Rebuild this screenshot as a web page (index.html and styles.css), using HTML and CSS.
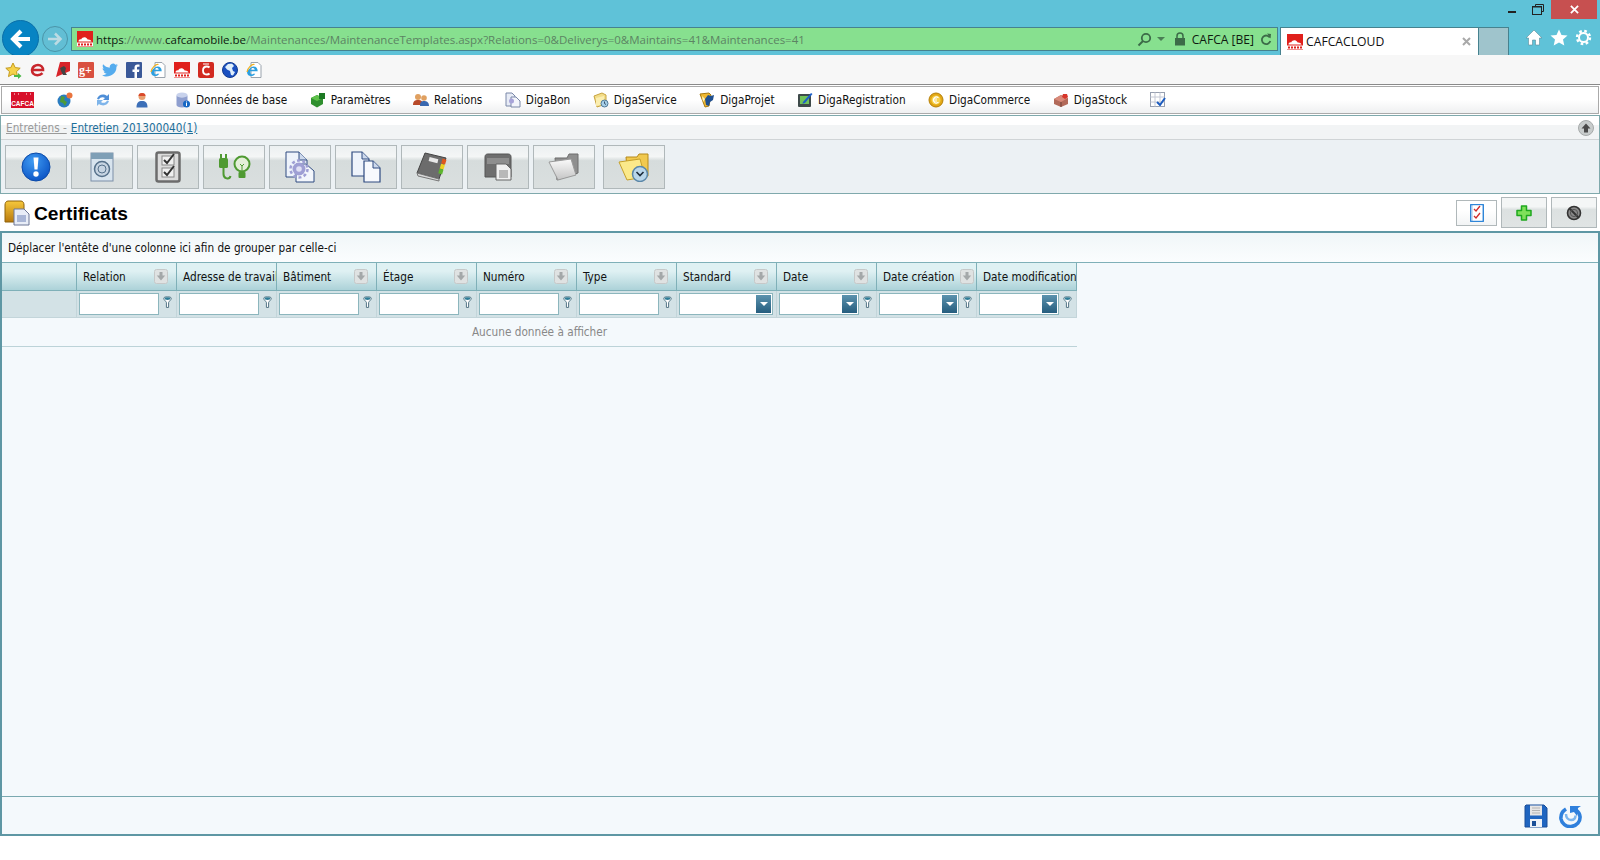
FILE: index.html
```html
<!DOCTYPE html>
<html lang="fr">
<head>
    <meta charset="UTF-8">
    <title>CAFCACLOUD</title>
    <link rel="stylesheet" href="styles.css">
</head>
<body>
    <svg class="icon-defs" xmlns="http://www.w3.org/2000/svg">
        <defs>
            <radialGradient id="info-fill" cx="40%" cy="30%" r="75%">
                <stop offset="0" stop-color="#3f9bf2"/>
                <stop offset="1" stop-color="#0a52c4"/>
            </radialGradient>
            <linearGradient id="grey-fold" x1="0" y1="0" x2="0" y2="1">
                <stop offset="0" stop-color="#fbfbfb"/>
                <stop offset="1" stop-color="#c4c4c4"/>
            </linearGradient>
            <linearGradient id="box-fill" x1="0" y1="0" x2="0" y2="1">
                <stop offset="0" stop-color="#f6c83c"/>
                <stop offset="1" stop-color="#b9790c"/>
            </linearGradient>
        </defs>
        <symbol id="cafca" viewBox="0 0 16 16">
            <rect width="16" height="16" fill="#e0201c"/>
            <path d="M1.500 10.500c0-1.600 1.400-2.400 2.600-2.100C5 6.600 7 5.800 8.600 6.400c1.200.4 1.800 1.300 2 2.100 1.500-.3 3.600.4 3.900 2z" fill="#fff"/>
            <rect y="11.500" width="16" height="4" fill="#fff"/>
            <path d="M1 13.500h14" stroke="#e0201c" stroke-width="2" stroke-dasharray="2 1"/>
        </symbol>
        <symbol id="ie-page" viewBox="0 0 16 16">
            <path d="M5 .5h7l3 3v12H5z" fill="#fff" stroke="#9aa3ad"/>
            <path d="M4.500 9.200h7.200c0-3.200-1.800-4.700-3.800-4.700S3.500 6 1 9.500c0 3 1.600 4.500 3.800 4.500 2.200 0 3.600-.8 4.400-2.300H7.400c-1.400 1.400-3.400.8-3-2.500zm.1-1.500c.3-1.200 1.600-1.800 2.600-1.600.8.1 1.400.7 1.500 1.600z" fill="#2c9fe0"/>
            <path d="M1 10C1.500 6 6 1.500 8.500 2.500" fill="none" stroke="#f0b020" stroke-width="1.200"/>
        </symbol>
        <symbol id="sort" viewBox="0 0 14 15">
            <rect x=".5" y=".5" width="13" height="14" rx="2" fill="#dfe2e2" stroke="#c6c8c8"/>
            <path d="M5.500 3h3v3.500h2.700L7 11.500 2.800 6.500h2.700z" fill="#a4a8a9"/>
        </symbol>
        <symbol id="funnel" viewBox="0 0 10 14">
            <path d="M.8 2.500C.8 1 2.800.7 5 .7s4.200.3 4.200 1.800c0 1.400-2.500 3.200-3 4.500v5.500H3.800V7c-.5-1.300-3-3.100-3-4.500z" fill="#fff" stroke="#44697a" stroke-width="1"/>
            <ellipse cx="5" cy="2.600" rx="3.300" ry="1.500" fill="#2f7d97"/>
        </symbol>
    </svg>

    <header class="chrome">
        <div class="caption">
            <span class="win-min"></span>
            <svg class="win-restore" width="12" height="11" viewBox="0 0 12 11"><path d="M3.500 2.500v-2h8v7h-2" fill="none" stroke="#222"/><rect x=".5" y="2.500" width="9" height="8" fill="none" stroke="#222" stroke-width="1"/><path d="M0 3h10" stroke="#222"/></svg>
            <span class="win-close">
                <svg width="9" height="9" viewBox="0 0 10 10"><path d="M1 1l8 8M9 1l-8 8" stroke="#fff" stroke-width="2"/></svg>
            </span>
        </div>
        <div class="nav-row">
            <button class="back-btn">
                <svg width="24" height="24" viewBox="0 0 24 24"><path d="M21 12H5M12 4l-8 8 8 8" fill="none" stroke="#fff" stroke-width="4"/></svg>
            </button>
            <button class="forward-btn">
                <svg width="16" height="16" viewBox="0 0 16 16"><path d="M1 8h12M8 2.500 13.500 8 8 13.500" fill="none" stroke="#bcdbe3" stroke-width="2.500"/></svg>
            </button>
            <div class="address-bar">
                <svg class="favicon" width="16" height="16"><use href="#cafca"/></svg>
                <span class="url"><span class="url-dark">https</span>://www.<span class="url-dark">cafcamobile.be</span>/Maintenances/MaintenanceTemplates.aspx?Relations=0&amp;Deliverys=0&amp;Maintains=41&amp;Maintenances=41</span>
                <svg class="addr-search" width="15" height="15" viewBox="0 0 15 15"><circle cx="9" cy="6" r="4.200" fill="none" stroke="#3c6b48" stroke-width="1.800"/><path d="M6 9l-4.500 4.500" stroke="#3c6b48" stroke-width="2"/></svg>
                <span class="addr-caret"></span>
                <svg class="addr-lock" width="12" height="14" viewBox="0 0 12 14"><path d="M3 6V4a3 3 0 0 1 6 0v2" fill="none" stroke="#3c6b48" stroke-width="1.500"/><rect x="1" y="6" width="10" height="7.500" fill="#3c6b48"/></svg>
                <span class="addr-cert">CAFCA [BE]</span>
                <svg class="addr-refresh" width="12" height="13" viewBox="0 0 12 13"><path d="M9.800 4.500A4.300 4.300 0 1 0 10.300 8" fill="none" stroke="#3c6b48" stroke-width="1.800"/><path d="M7 .5l4 .5-.5 4.500z" fill="#3c6b48"/></svg>
            </div>
            <div class="tab">
                <svg width="16" height="16"><use href="#cafca"/></svg>
                <span class="tab-title">CAFCACLOUD</span>
                <svg class="tab-close" width="9" height="9" viewBox="0 0 9 9"><path d="M1 1l7 7M8 1 1 8" stroke="#a9a9a9" stroke-width="2"/></svg>
            </div>
            <div class="new-tab"></div>
            <div class="chrome-tools">
                <svg width="18" height="17" viewBox="0 0 18 17"><path d="M9 1 1 9h2.500v7h4v-5h3v5h4V9H17z" fill="#fff" stroke="#5a8b98" stroke-width=".6"/></svg>
                <svg width="18" height="17" viewBox="0 0 18 17"><path d="M9 .5l2.500 5.500 6 .6-4.500 4 1.300 6L9 13.500 3.700 16.600 5 10.600.5 6.600l6-.6z" fill="#fff"/></svg>
                <svg width="17" height="17" viewBox="0 0 17 17"><circle cx="8.500" cy="8.500" r="4.500" fill="none" stroke="#fff" stroke-width="2"/><circle cx="8.500" cy="8.500" r="6.500" fill="none" stroke="#fff" stroke-width="2.400" stroke-dasharray="2.600 2.500"/></svg>
            </div>
        </div>
    </header>

    <div class="fav-bar">
        <svg width="17" height="17" viewBox="0 0 17 17"><path d="M8 1l2.200 4.600 5 .6-3.700 3.400 1 5L8 12l-4.500 2.600 1-5L.8 6.200l5-.6z" fill="#f6d24a" stroke="#c49a1c"/><path d="M9 13h4v-2l3.500 3-3.500 3v-2H9z" fill="#4cb848"/></svg>
        <svg width="16" height="16" viewBox="0 0 16 16"><path d="M2.500 8h10.500c0-3-2.200-5-5-5S2 5 2 8s2.300 5.200 5.500 5.200c2 0 3.800-.8 5-2" fill="none" stroke="#c8262c" stroke-width="2.600"/></svg>
        <svg width="16" height="16" viewBox="0 0 16 16"><path d="M6 0h10v9L2 15z" fill="#d8242a"/><path d="M6 6l4-2 2 2-1 4 2 3H9L7 9z" fill="#444"/></svg>
        <svg width="16" height="16" viewBox="0 0 16 16"><rect width="16" height="16" rx="1" fill="#d9503f"/><text x="1" y="12" class="gplus-text">g+</text></svg>
        <svg width="16" height="16" viewBox="0 0 16 16"><path d="M16 3.200c-.6.300-1.200.4-1.900.5.700-.4 1.200-1 1.400-1.800-.6.400-1.300.6-2.100.8A3.300 3.300 0 0 0 7.800 5.700C5.100 5.600 2.700 4.300 1.100 2.300.3 3.800.7 5.600 2.100 6.600c-.5 0-1-.2-1.500-.4 0 1.600 1.100 2.900 2.600 3.200-.5.100-1 .2-1.500.1.400 1.300 1.600 2.200 3 2.300A6.600 6.600 0 0 1 0 13.200c5.200 3.300 15-.1 14.400-8.400.6-.4 1.200-1 1.600-1.600z" fill="#55acee"/></svg>
        <svg width="16" height="16" viewBox="0 0 16 16"><rect width="16" height="16" rx="1" fill="#3b5998"/><path d="M11 16V10h2l.4-2.500H11V6c0-.8.3-1.200 1.200-1.200h1.300V2.500C13 2.400 12.300 2.400 11.500 2.400 9.700 2.400 8.500 3.500 8.500 5.600v1.900h-2V10h2v6z" fill="#fff"/></svg>
        <svg width="16" height="16"><use href="#ie-page"/></svg>
        <svg width="16" height="16"><use href="#cafca"/></svg>
        <svg width="16" height="16" viewBox="0 0 16 16"><rect width="16" height="16" rx="2" fill="#d22a20"/><path d="M11.500 5.500C10.800 4.800 9.800 4.500 8.800 4.500 6.800 4.500 5 6 5 8.500s1.800 4 3.800 4c1 0 2-.3 2.700-1" fill="none" stroke="#fff" stroke-width="1.800"/><path d="M5 2h6" stroke="#fff"/></svg>
        <svg width="16" height="16" viewBox="0 0 16 16"><circle cx="8" cy="8" r="7.500" fill="#1a4fc0"/><path d="M6 2l4-.5 2 2.500-2 2 1 3 2 1-2 3.500-2-.5-1-4-3-1.500L3 5z" fill="#dfeefb"/><circle cx="8" cy="8" r="7.500" fill="none" stroke="#123a90"/></svg>
        <svg width="16" height="16"><use href="#ie-page"/></svg>
    </div>

    <nav class="menu-bar">
        <svg class="menu-logo" width="23" height="16" viewBox="0 0 23 16"><rect width="23" height="16" fill="#d8102a"/><path d="M3 2h2M7 2h2M15 2h2M19 2h1" stroke="#fff" stroke-dasharray="1 1"/><text x="11.500" y="13.500" class="logo-text">CAFCA</text></svg>
        <svg width="16" height="16" viewBox="0 0 16 16"><circle cx="7" cy="9" r="6.500" fill="#2a7cc0"/><path d="M4 4l4 1-1 3 3 2-2 4-2-3-3-1z" fill="#4d9b3a"/><circle cx="12.500" cy="3.500" r="3" fill="#e9743e"/></svg>
        <svg width="16" height="16" viewBox="0 0 16 16"><path d="M2 7c1-4 6-6 10-3l2-2v6H8l2-2C8 4.500 5 5 4 7.500z" fill="#4f8fd8"/><path d="M14 9c-1 4-6 6-10 3l-2 2V8h6l-2 2c2 1.500 5 1 6-1.500z" fill="#7fb5ea"/></svg>
        <svg width="16" height="16" viewBox="0 0 16 16"><circle cx="8" cy="4.500" r="3.500" fill="#e8a070"/><path d="M4.500 4a3.500 3 0 0 1 7 0z" fill="#d9482a"/><path d="M2.500 15.500c0-5 2-6.500 5.500-6.500s5.500 1.500 5.500 6.500z" fill="#3c6fb8"/></svg>
        <a class="menu-item menu-item-first"><svg width="16" height="16" viewBox="0 0 16 16"><ellipse cx="7" cy="3" rx="5.500" ry="2.500" fill="#c8d2ec"/><path d="M1.500 3v10c0 1.400 2.500 2.500 5.500 2.500S12.500 14.400 12.500 13V3c0 1.400-2.500 2.500-5.500 2.500S1.500 4.400 1.500 3z" fill="#8f9fcf"/><circle cx="11.500" cy="12" r="3.500" fill="#1768c4"/><rect x="11" y="9.500" width="1" height="1" fill="#fff"/><rect x="11" y="11" width="1" height="3" fill="#fff"/></svg>Données de base</a>
        <a class="menu-item"><svg width="16" height="16" viewBox="0 0 16 16"><path d="M1 6l6-3 6 3v6l-6 3.500L1 12z" fill="#2f8f2f"/><path d="M1 6l6 3 6-3-6-3z" fill="#5fc24a"/><rect x="9" y="1" width="6" height="6" fill="#1d7a24"/></svg>Paramètres</a>
        <a class="menu-item"><svg width="16" height="16" viewBox="0 0 16 16"><circle cx="5" cy="5" r="3" fill="#e0a060"/><path d="M0 13c0-4 2-5 5-5s5 1 5 5z" fill="#b84a2a"/><circle cx="11" cy="6" r="2.800" fill="#e0a060"/><path d="M7 14c0-4 1.500-5 4-5s5 1 5 5z" fill="#3968b0"/></svg>Relations</a>
        <a class="menu-item"><svg width="16" height="16" viewBox="0 0 16 16"><path d="M1 1h6l3 3v10H1z" fill="#e8ecf6" stroke="#7a88a8"/><path d="M6 5h5l4 4v6H6z" fill="#f3f5fb" stroke="#7a88a8"/><circle cx="6.500" cy="9" r="2.500" fill="#a8a4d8"/></svg>DigaBon</a>
        <a class="menu-item"><svg width="16" height="16" viewBox="0 0 16 16"><path d="M1 4l8-3 4 2v9l-9 3z" fill="#f3dd88" stroke="#c8a440"/><path d="M3 6l8-2v8l-8 2z" fill="#fbeeb0"/><circle cx="11.500" cy="11.500" r="3.500" fill="#a8d0e8" stroke="#507a98"/><path d="M11.500 9.500v2l1.500 1" stroke="#34506a" fill="none"/></svg>DigaService</a>
        <a class="menu-item"><svg width="16" height="16" viewBox="0 0 16 16"><path d="M1 2l9-1 2 2-2 11-4 1z" fill="#f0b830" stroke="#a87a10"/><path d="M6 7l3-4 3 1 3-1-1 5-3 2-1 4-3-1z" fill="#1f4f8f"/><path d="M3 4l3 3-2 3z" fill="#fff3c0"/></svg>DigaProjet</a>
        <a class="menu-item"><svg width="16" height="16" viewBox="0 0 16 16"><rect x="1" y="2" width="13" height="13" rx="1" fill="#3e4a4a"/><rect x="3" y="4" width="9" height="8" fill="#6fc25a"/><path d="M6 10 14 1l1.500 1L8 11l-2.500.8z" fill="#1c5fc8"/></svg>DigaRegistration</a>
        <a class="menu-item"><svg width="16" height="16" viewBox="0 0 16 16"><circle cx="8" cy="8" r="7" fill="#e2a714" stroke="#b57f08"/><circle cx="8" cy="8" r="4.600" fill="#f7d24c"/><path d="M10.500 5.800A3 3 0 1 0 10.500 10.200M5 7h4M5 9h4" fill="none" stroke="#fff" stroke-width="1.100"/></svg>DigaCommerce</a>
        <a class="menu-item"><svg width="16" height="16" viewBox="0 0 16 16"><path d="M1 7l7-4 7 3v6l-7 3-7-3z" fill="#b26a5a"/><path d="M1 7l7 3 7-4-7-3z" fill="#d98a7a"/><path d="M8 10v5" stroke="#6e4038"/><path d="M10 2h4l1 3-3 2-3-2z" fill="#d8362a"/></svg>DigaStock</a>
        <svg width="16" height="16" viewBox="0 0 16 16"><rect x=".5" y=".5" width="14" height="14" fill="#fff" stroke="#98a0b0"/><path d="M5 .5v14M10 .5v14M.5 5h14M.5 10h14" stroke="#c4c8d4"/><path d="M7 10l3 3 5-7" fill="none" stroke="#1c5cc0" stroke-width="2"/></svg>
    </nav>

    <section class="record-panel">
        <div class="breadcrumb">
            <span class="crumb-parent">Entretiens -</span>
            <a class="crumb-current">Entretien 201300040(1)</a>
            <span class="collapse-btn">
                <svg width="10" height="10" viewBox="0 0 10 10"><path d="M5 .5 9.500 5.500H7V9.500H3V5.500H.5z" fill="#4a4a4a"/></svg>
            </span>
        </div>
        <div class="toolbar">
            <button class="tool-btn">
                <svg width="30" height="30" viewBox="0 0 30 30"><circle cx="15" cy="15" r="14" fill="url(#info-fill)" stroke="#0b4aa8"/><path d="M12.500 5.500h5l-1 12h-3z" fill="#fff"/><circle cx="15" cy="22" r="2.700" fill="#fff"/></svg>
            </button>
            <button class="tool-btn">
                <svg width="24" height="30" viewBox="0 0 24 30"><rect x="1" y="1" width="22" height="28" fill="#d8e4ee" stroke="#7d8fa8"/><rect x="1" y="1" width="22" height="6" fill="#7f9fb6"/><circle cx="12" cy="17" r="7.500" fill="#c6d4e2" stroke="#55708a" stroke-width="1.500"/><circle cx="12" cy="17" r="4" fill="none" stroke="#55708a"/></svg>
            </button>
            <button class="tool-btn">
                <svg width="26" height="32" viewBox="0 0 26 32"><rect x="1.500" y="1.500" width="23" height="29" rx="2" fill="#dcdcdc" stroke="#6c6c6c" stroke-width="2.500"/><rect x="7" y="5" width="12" height="9" fill="#f0f0f0" stroke="#888"/><rect x="7" y="17" width="12" height="9" fill="#f0f0f0" stroke="#888"/><path d="M9 9l3 3 7-9M9 21l3 3 7-9" fill="none" stroke="#333" stroke-width="2"/></svg>
            </button>
            <button class="tool-btn">
                <svg width="34" height="28" viewBox="0 0 34 28"><rect x="2" y="5" width="9" height="10" rx="1.500" fill="#4f9a32"/><path d="M4 1v4M9 1v4" stroke="#4f9a32" stroke-width="2"/><path d="M6.500 15v6c0 5 6 6 7 2" fill="none" stroke="#4f9a32" stroke-width="2"/><circle cx="25" cy="11" r="7.500" fill="#e4efd8" stroke="#4f9a32" stroke-width="2"/><path d="M25 18v-5l-2-2M25 13l2-2" fill="none" stroke="#4f9a32"/><rect x="21.500" y="19" width="7" height="6" rx="1" fill="#4f9a32"/></svg>
            </button>
            <button class="tool-btn">
                <svg width="32" height="32" viewBox="0 0 32 32"><path d="M2 1h13l8 8v17H2z" fill="#eef3fb" stroke="#2e4a80"/><path d="M15 1v8h8" fill="#cdd9ec" stroke="#2e4a80"/><path d="M12 13h10l8 7v11H12z" fill="#f4f7fc" stroke="#2e4a80"/><circle cx="15" cy="18" r="6.500" fill="#9f9fd4"/><circle cx="15" cy="18" r="8.500" fill="none" stroke="#9f9fd4" stroke-width="2.500" stroke-dasharray="3 2.400"/><circle cx="15" cy="18" r="2.800" fill="#e0e0f4"/></svg>
            </button>
            <button class="tool-btn">
                <svg width="32" height="32" viewBox="0 0 32 32"><path d="M2 1h10l7 7v17H2z" fill="#eef3fb" stroke="#2e4a80" stroke-width="1.200"/><path d="M12 1v7h7" fill="#cdd9ec" stroke="#2e4a80"/><path d="M14 10h9l7 7v14H14z" fill="#f7f9fd" stroke="#2e4a80" stroke-width="1.200"/><path d="M23 10v7h7" fill="#cdd9ec" stroke="#2e4a80"/></svg>
            </button>
            <button class="tool-btn">
                <svg width="32" height="30" viewBox="0 0 32 30"><path d="M9 1 30 6 23 27 1 21z" fill="#6c6c6c" stroke="#444"/><path d="M1 21l22 6v2L2 24z" fill="#d8d8d8" stroke="#777"/><rect x="13" y="6" width="9" height="4" transform="rotate(14 17 8)" fill="#e8e8e8"/><rect x="26" y="7" width="4" height="5" transform="rotate(16 28 9)" fill="#e0561e"/><rect x="24.500" y="12" width="4" height="5" transform="rotate(16 26 14)" fill="#eed020"/><rect x="23" y="17" width="4" height="5" transform="rotate(16 25 19)" fill="#5db52e"/></svg>
            </button>
            <button class="tool-btn">
                <svg width="30" height="30" viewBox="0 0 30 30"><path d="M2 5c0-2 1-3 3-3h20c2 0 3 1 3 3v20H2z" fill="#6e6e6e" stroke="#555"/><rect x="4" y="6" width="22" height="6" fill="#8e8e8e"/><path d="M13 12h10l5 5v11H13z" fill="#f0f0f0" stroke="#666"/><rect x="16" y="18" width="9" height="8" fill="#b8b8b8"/></svg>
            </button>
            <button class="tool-btn">
                <svg width="32" height="30" viewBox="0 0 32 30"><path d="M7 6h12l2-4h9v19l-21 7z" fill="#8f8f8f" stroke="#6f6f6f"/><path d="M1 10l22-3 5 16-18 5z" fill="url(#grey-fold)" stroke="#9a9a9a"/></svg>
            </button>
            <button class="tool-btn tool-btn-last">
                <svg width="32" height="30" viewBox="0 0 32 30"><path d="M8 5h11l2-3h9v22l-20 3z" fill="#f1c94f" stroke="#b58a1c"/><path d="M1 10l21-3 5 18-18 3z" fill="#fbe98a" stroke="#c6a02a"/><circle cx="22" cy="22" r="7.500" fill="#b9d6ea" stroke="#5a87a8" stroke-width="1.500"/><path d="M18.500 20l3.500 3.500 3.500-3.500" fill="none" stroke="#1d2b3a" stroke-width="1.600"/></svg>
            </button>
        </div>
    </section>

    <div class="page-title">
        <svg class="title-icon" width="26" height="26" viewBox="0 0 26 26"><path d="M1 5c0-2 1-4 3-4h13c2 0 3 2 3 4v17H1z" fill="url(#box-fill)" stroke="#8f620b"/><path d="M10 9h10l5 5v11H10z" fill="#e8edf7" stroke="#6d7796"/><rect x="13" y="15" width="9" height="7" fill="#a9b6d6"/></svg>
        <h1>Certificats</h1>
        <div class="title-actions">
            <button class="action-btn action-btn-small">
                <svg width="14" height="18" viewBox="0 0 14 18"><rect x=".5" y=".5" width="13" height="17" rx="1" fill="#cfe0f6" stroke="#2f86d8" stroke-width="1.500"/><rect x="3" y="1.500" width="9" height="15" fill="#fff"/><path d="M4 5l2 2 4-5M4 12l2 2 4-5" fill="none" stroke="#d02a2a" stroke-width="1.300"/></svg>
            </button>
            <button class="action-btn">
                <svg width="16" height="16" viewBox="0 0 16 16"><path d="M5.500 1h5v4.500H15v5h-4.500V15h-5v-4.500H1v-5h4.500z" fill="#7fe05a" stroke="#1fa81f" stroke-width="1.500" stroke-linejoin="round"/></svg>
            </button>
            <button class="action-btn">
                <svg width="16" height="16" viewBox="0 0 16 16"><circle cx="8" cy="8" r="6.500" fill="#8a8a8a" stroke="#333" stroke-width="1.600"/><path d="M3.800 3.800l8.400 8.400" stroke="#333" stroke-width="2"/><circle cx="8" cy="8" r="3.600" fill="none" stroke="#555"/></svg>
            </button>
        </div>
    </div>

    <main class="grid-wrap">
        <div class="group-panel">Déplacer l'entête d'une colonne ici afin de grouper par celle-ci</div>
        <div class="data-grid">
            <div class="head-cell head-indent"></div>
            <div class="head-cell"><span>Relation</span><svg class="sort-btn"><use href="#sort"/></svg></div>
            <div class="head-cell"><span>Adresse de travail</span></div>
            <div class="head-cell"><span>Bâtiment</span><svg class="sort-btn"><use href="#sort"/></svg></div>
            <div class="head-cell"><span>Étage</span><svg class="sort-btn"><use href="#sort"/></svg></div>
            <div class="head-cell"><span>Numéro</span><svg class="sort-btn"><use href="#sort"/></svg></div>
            <div class="head-cell"><span>Type</span><svg class="sort-btn"><use href="#sort"/></svg></div>
            <div class="head-cell"><span>Standard</span><svg class="sort-btn"><use href="#sort"/></svg></div>
            <div class="head-cell"><span>Date</span><svg class="sort-btn"><use href="#sort"/></svg></div>
            <div class="head-cell"><span>Date création</span><svg class="sort-btn sort-btn-tight"><use href="#sort"/></svg></div>
            <div class="head-cell"><span>Date modification</span></div>

            <div class="filter-cell"></div>
            <div class="filter-cell"><span class="filter-input"></span><svg class="funnel"><use href="#funnel"/></svg></div>
            <div class="filter-cell"><span class="filter-input"></span><svg class="funnel"><use href="#funnel"/></svg></div>
            <div class="filter-cell"><span class="filter-input"></span><svg class="funnel"><use href="#funnel"/></svg></div>
            <div class="filter-cell"><span class="filter-input"></span><svg class="funnel"><use href="#funnel"/></svg></div>
            <div class="filter-cell"><span class="filter-input"></span><svg class="funnel"><use href="#funnel"/></svg></div>
            <div class="filter-cell"><span class="filter-input"></span><svg class="funnel"><use href="#funnel"/></svg></div>
            <div class="filter-cell"><span class="filter-input filter-input-wide"><span class="drop-btn"></span></span></div>
            <div class="filter-cell"><span class="filter-input"><span class="drop-btn"></span></span><svg class="funnel"><use href="#funnel"/></svg></div>
            <div class="filter-cell"><span class="filter-input"><span class="drop-btn"></span></span><svg class="funnel"><use href="#funnel"/></svg></div>
            <div class="filter-cell"><span class="filter-input"><span class="drop-btn"></span></span><svg class="funnel"><use href="#funnel"/></svg></div>

            <div class="no-data">Aucune donnée à afficher</div>
        </div>
        <div class="grid-fill"></div>
        <div class="grid-footer">
            <svg width="24" height="24" viewBox="0 0 24 24"><path d="M2 1h18l3 3v19H1V2z" fill="#1f65c0" stroke="#1a4f98"/><rect x="6" y="1.500" width="12" height="10" fill="#e6e6e6"/><path d="M8 4h8M8 6.500h8M8 9h8" stroke="#b4b4b4"/><rect x="6" y="15" width="12" height="8" fill="#eef2f8"/><rect x="8" y="17" width="4" height="5" fill="#1a4f98"/></svg>
            <svg width="24" height="24" viewBox="0 0 24 24"><path d="M7 5C3 7.500 1.500 11 2 15c.7 4.500 5 8 10 7.500 6-.5 9.500-5 9-10-.3-3-2-5-4-6.500" fill="none" stroke="#2f80dc" stroke-width="3.600"/><path d="M7 10c0 3.500 2 6 5 6s4.500-2 4.500-4.500" fill="none" stroke="#7cb6ee" stroke-width="2.500"/><path d="M11 2h11l-3 2-1 8-3-4-4 1z" fill="#2f80dc"/></svg>
        </div>
    </main>
</body>
</html>
```

FILE: styles.css
```css
* {
    box-sizing: border-box;
}

body {
    margin: 0;
    background-color: #fff;
    font-family: 'DejaVu Sans Condensed', 'DejaVu Sans', sans-serif;
    font-size: 11.7px;
    color: #111;
    height: 860px;
    overflow: hidden;
}

svg {
    display: block;
    flex: none;
}

button {
    padding: 0;
    font: inherit;
}

.icon-defs {
    position: absolute;
    width: 0;
    height: 0;
}

/* browser chrome */
.chrome {
    height: 55px;
    background-color: #5fc2d8;
    overflow: hidden;
}

.caption {
    height: 27px;
    display: flex;
    justify-content: flex-end;
    align-items: flex-start;
    padding-right: 3px;
}

.win-min {
    width: 8px;
    height: 2px;
    background-color: #222;
    margin: 11px 16px 0 0;
}

.win-restore {
    margin: 4px 7px 0 0;
}

.win-close {
    width: 46px;
    height: 19px;
    background-color: #c75050;
    display: flex;
    align-items: center;
    justify-content: center;
}

.nav-row {
    height: 28px;
    display: flex;
    align-items: flex-start;
    padding-left: 2px;
}

.back-btn {
    width: 37px;
    height: 37px;
    margin-top: -7px;
    border-radius: 50%;
    border: 1px solid #0a6fa8;
    background-color: #0784c3;
    display: flex;
    align-items: center;
    justify-content: center;
    flex: none;
}

.forward-btn {
    width: 26px;
    height: 26px;
    margin: -1px 3px 0 3px;
    border-radius: 50%;
    border: 1px solid #4b94a8;
    background-color: #62bed4;
    display: flex;
    align-items: center;
    justify-content: center;
    flex: none;
}

.address-bar {
    width: 1207px;
    height: 24px;
    background-color: #87e08f;
    border: 1px solid #46828f;
    display: flex;
    align-items: center;
    padding: 0 5px;
    flex: none;
    font-family: 'Open Sans', sans-serif;
    font-size: 11.500px;
    color: #5c8463;
}

.favicon {
    margin-right: 3px;
}

.url {
    flex: 1;
    white-space: nowrap;
    overflow: hidden;
}

.url-dark {
    color: #0e1a10;
}

.addr-caret {
    width: 0;
    height: 0;
    border-left: 4px solid transparent;
    border-right: 4px solid transparent;
    border-top: 4px solid #4a7f55;
    margin: 0 9px 0 5px;
}

.addr-cert {
    color: #0e1a10;
    margin: 0 6px 0 6px;
    font-size: 12.100px;
}

.tab {
    width: 199px;
    height: 28px;
    margin-left: 2px;
    background-color: #fff;
    border: 1px solid #46828f;
    border-bottom: none;
    display: flex;
    align-items: center;
    padding: 0 7px 0 6px;
    font-family: 'Open Sans', sans-serif;
    font-size: 12.200px;
    flex: none;
}

.tab-title {
    flex: 1;
    margin-left: 3px;
}

.new-tab {
    width: 30px;
    height: 28px;
    background-color: #9fc4cc;
    border-right: 1px solid #46828f;
    border-top: 1px solid #46828f;
    flex: none;
}

.chrome-tools {
    display: flex;
    align-items: center;
    gap: 7px;
    margin: 2px 0 0 16px;
}

.fav-bar {
    height: 30px;
    background-color: #f7f7f7;
    border-bottom: 1px solid #8a8a8a;
    display: flex;
    align-items: center;
    gap: 8px;
    padding: 1px 0 0 5px;
}

.gplus-text {
    font-family: 'Liberation Serif', serif;
    font-size: 12px;
    font-weight: bold;
    fill: #fff;
}

/* menu */
.menu-bar {
    height: 28px;
    margin: 1px 1px 0 1px;
    border: 1px solid #aaa;
    background: linear-gradient(#fff 50%, #eff0f1);
    display: flex;
    align-items: center;
    gap: 22.500px;
    padding-left: 9px;
}

.logo-text {
    font-family: 'Liberation Sans', sans-serif;
    font-size: 6.500px;
    font-weight: bold;
    fill: #fff;
    text-anchor: middle;
}

.menu-item {
    display: flex;
    align-items: center;
    gap: 5px;
    white-space: nowrap;
}

.menu-item-first {
    margin-left: 3px;
}

/* record panel */
.record-panel {
    margin-top: 1px;
    height: 79px;
    border: 1px solid #7fa9ac;
    background-color: #ecf1f4;
}

.breadcrumb {
    height: 24px;
    background: linear-gradient(#fff 40%, #f2f4f5 40%);
    border-bottom: 1px solid #d0d4d6;
    display: flex;
    align-items: center;
    gap: 4px;
    padding: 0 5px;
}

.crumb-parent {
    color: #9a9a9a;
    text-decoration: underline;
}

.crumb-current {
    color: #1d6f9a;
    text-decoration: underline;
}

.collapse-btn {
    width: 16px;
    height: 16px;
    margin-left: auto;
    border-radius: 50%;
    background-color: #c8cccc;
    border: 1px solid #a6aaaa;
    display: flex;
    align-items: center;
    justify-content: center;
}

.toolbar {
    display: flex;
    gap: 4px;
    padding: 5px 0 0 4px;
}

.tool-btn {
    width: 62px;
    height: 44px;
    border: 1px solid #b0b8ba;
    background: linear-gradient(#ecf0f1, #f4f6f6 25%, #d6dcdc 35%, #dadfdf);
    display: flex;
    align-items: center;
    justify-content: center;
}

.tool-btn-last {
    margin-left: 4px;
}

/* title row */
.page-title {
    height: 37px;
    display: flex;
    align-items: center;
    padding: 0 3px 0 4px;
}

.title-icon {
    margin-right: 4px;
}

.page-title h1 {
    margin: 0;
    padding-top: 2px;
    font-family: 'Liberation Sans', sans-serif;
    font-size: 19.200px;
    font-weight: bold;
    color: #000;
}

.title-actions {
    margin-left: auto;
    display: flex;
    align-items: center;
    gap: 4px;
}

.action-btn {
    width: 46px;
    height: 31px;
    border: 1px solid #b0b8ba;
    background: linear-gradient(#f4f6f6 30%, #dce1e1 40%, #e0e4e4);
    display: flex;
    align-items: center;
    justify-content: center;
}

.action-btn-small {
    width: 41px;
    height: 26px;
    background: linear-gradient(#fff 40%, #f2f4f5);
}

/* grid */
.grid-wrap {
    height: 605px;
    border: 2px solid #5e97a4;
    background-color: #f4f9fc;
    display: flex;
    flex-direction: column;
}

.group-panel {
    height: 30px;
    flex: none;
    background: linear-gradient(#f0f6f8, #fbfdfe);
    border-bottom: 1px solid #7fb0b8;
    display: flex;
    align-items: center;
    padding-left: 6px;
}

.data-grid {
    display: grid;
    grid-template-columns: 75px repeat(10, 100px);
    grid-template-rows: 28px 27px 29px;
    width: 1075px;
    flex: none;
}

.head-cell {
    border-right: 1px solid #7fb0b8;
    border-bottom: 1px solid #7fb0b8;
    background: linear-gradient(#dff1f3 30%, #acd2d8);
    display: flex;
    align-items: center;
    padding-left: 6px;
    overflow: hidden;
    white-space: nowrap;
}

.head-cell span {
    flex: 1;
}

.head-indent {
    padding: 0;
}

.sort-btn {
    width: 14px;
    height: 15px;
    margin-right: 8px;
}

.sort-btn-tight {
    margin-right: 2px;
}

.filter-cell {
    background-color: #d3e2e6;
    border-right: 1px solid #c3d5da;
    border-bottom: 1px solid #c3d5da;
    display: flex;
    align-items: center;
    padding: 0 0 1px 2px;
}

.filter-input {
    width: 80px;
    height: 22px;
    background-color: #fff;
    border: 1px solid #8cb6bd;
    display: flex;
    justify-content: flex-end;
    padding: 1px;
}

.filter-input-wide {
    width: 94px;
}

.drop-btn {
    width: 15px;
    background: linear-gradient(#5c93ae, #255d7e);
    display: flex;
    align-items: center;
    justify-content: center;
}

.drop-btn::after {
    content: "";
    border-left: 4px solid transparent;
    border-right: 4px solid transparent;
    border-top: 4px solid #fff;
}

.funnel {
    width: 9px;
    height: 13px;
    margin: -2px 0 0 4px;
}

.no-data {
    grid-column: 1 / -1;
    border-bottom: 1px solid #bcd3d8;
    color: #888;
    display: flex;
    align-items: center;
    justify-content: center;
}

.grid-fill {
    flex: 1;
}

.grid-footer {
    height: 38px;
    flex: none;
    border-top: 1px solid #7aa9b0;
    display: flex;
    align-items: center;
    justify-content: flex-end;
    gap: 11px;
    padding-right: 15px;
}
```
